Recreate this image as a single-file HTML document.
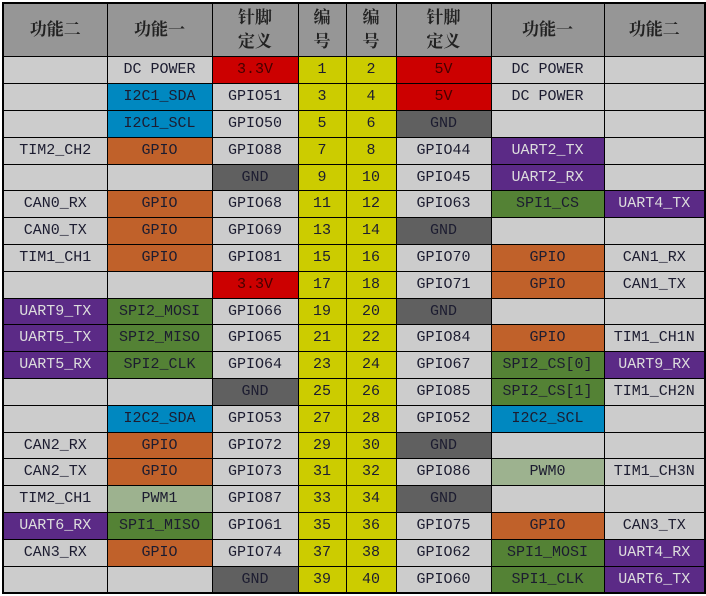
<!DOCTYPE html>
<html><head><meta charset="utf-8"><style>
body{margin:0;background:#fff;width:706px;height:596px;overflow:hidden}
table{position:absolute;left:2px;top:2px;border-collapse:collapse;table-layout:fixed;border:2px solid #000}
td,th{border:1px solid #000;padding:0;text-align:center;white-space:nowrap;overflow:hidden;
font-family:"Liberation Mono","Noto Serif CJK SC",monospace;font-size:15px;color:#1c1c30;background:#cccccc;height:26px;line-height:26px}
tr.s td{height:25px;line-height:25px}
th{background:#969696;font-family:"Liberation Serif","Noto Serif CJK SC",serif;font-weight:bold;font-size:17px;line-height:24px;color:#222;height:52px}
.r{background:#cc0000;color:#400}
.y{background:#cccc00}
.b{background:#0088c0}
.o{background:#c0612a}
.g{background:#548235}
.p{background:#5b2a86;color:#ddd}
.d{background:#606060}
.l{background:#9db28f}
</style></head><body>
<table>
<colgroup><col style="width:104px"><col style="width:105px"><col style="width:86px"><col style="width:48px"><col style="width:50px"><col style="width:95px"><col style="width:113px"><col style="width:101px"></colgroup>
<tr><th>功能二</th><th>功能一</th><th>针脚<br>定义</th><th>编<br>号</th><th>编<br>号</th><th>针脚<br>定义</th><th>功能一</th><th>功能二</th></tr>
<tr><td></td><td>DC POWER</td><td class="r">3.3V</td><td class="y">1</td><td class="y">2</td><td class="r">5V</td><td>DC POWER</td><td></td></tr>
<tr><td></td><td class="b">I2C1_SDA</td><td>GPIO51</td><td class="y">3</td><td class="y">4</td><td class="r">5V</td><td>DC POWER</td><td></td></tr>
<tr><td></td><td class="b">I2C1_SCL</td><td>GPIO50</td><td class="y">5</td><td class="y">6</td><td class="d">GND</td><td></td><td></td></tr>
<tr><td>TIM2_CH2</td><td class="o">GPIO</td><td>GPIO88</td><td class="y">7</td><td class="y">8</td><td>GPIO44</td><td class="p">UART2_TX</td><td></td></tr>
<tr class="s"><td></td><td></td><td class="d">GND</td><td class="y">9</td><td class="y">10</td><td>GPIO45</td><td class="p">UART2_RX</td><td></td></tr>
<tr><td>CAN0_RX</td><td class="o">GPIO</td><td>GPIO68</td><td class="y">11</td><td class="y">12</td><td>GPIO63</td><td class="g">SPI1_CS</td><td class="p">UART4_TX</td></tr>
<tr><td>CAN0_TX</td><td class="o">GPIO</td><td>GPIO69</td><td class="y">13</td><td class="y">14</td><td class="d">GND</td><td></td><td></td></tr>
<tr><td>TIM1_CH1</td><td class="o">GPIO</td><td>GPIO81</td><td class="y">15</td><td class="y">16</td><td>GPIO70</td><td class="o">GPIO</td><td>CAN1_RX</td></tr>
<tr><td></td><td></td><td class="r">3.3V</td><td class="y">17</td><td class="y">18</td><td>GPIO71</td><td class="o">GPIO</td><td>CAN1_TX</td></tr>
<tr class="s"><td class="p">UART9_TX</td><td class="g">SPI2_MOSI</td><td>GPIO66</td><td class="y">19</td><td class="y">20</td><td class="d">GND</td><td></td><td></td></tr>
<tr><td class="p">UART5_TX</td><td class="g">SPI2_MISO</td><td>GPIO65</td><td class="y">21</td><td class="y">22</td><td>GPIO84</td><td class="o">GPIO</td><td>TIM1_CH1N</td></tr>
<tr><td class="p">UART5_RX</td><td class="g">SPI2_CLK</td><td>GPIO64</td><td class="y">23</td><td class="y">24</td><td>GPIO67</td><td class="g">SPI2_CS[0]</td><td class="p">UART9_RX</td></tr>
<tr><td></td><td></td><td class="d">GND</td><td class="y">25</td><td class="y">26</td><td>GPIO85</td><td class="g">SPI2_CS[1]</td><td>TIM1_CH2N</td></tr>
<tr><td></td><td class="b">I2C2_SDA</td><td>GPIO53</td><td class="y">27</td><td class="y">28</td><td>GPIO52</td><td class="b">I2C2_SCL</td><td></td></tr>
<tr class="s"><td>CAN2_RX</td><td class="o">GPIO</td><td>GPIO72</td><td class="y">29</td><td class="y">30</td><td class="d">GND</td><td></td><td></td></tr>
<tr><td>CAN2_TX</td><td class="o">GPIO</td><td>GPIO73</td><td class="y">31</td><td class="y">32</td><td>GPIO86</td><td class="l">PWM0</td><td>TIM1_CH3N</td></tr>
<tr><td>TIM2_CH1</td><td class="l">PWM1</td><td>GPIO87</td><td class="y">33</td><td class="y">34</td><td class="d">GND</td><td></td><td></td></tr>
<tr><td class="p">UART6_RX</td><td class="g">SPI1_MISO</td><td>GPIO61</td><td class="y">35</td><td class="y">36</td><td>GPIO75</td><td class="o">GPIO</td><td>CAN3_TX</td></tr>
<tr><td>CAN3_RX</td><td class="o">GPIO</td><td>GPIO74</td><td class="y">37</td><td class="y">38</td><td>GPIO62</td><td class="g">SPI1_MOSI</td><td class="p">UART4_RX</td></tr>
<tr class="s"><td></td><td></td><td class="d">GND</td><td class="y">39</td><td class="y">40</td><td>GPIO60</td><td class="g">SPI1_CLK</td><td class="p">UART6_TX</td></tr>
</table>
</body></html>
